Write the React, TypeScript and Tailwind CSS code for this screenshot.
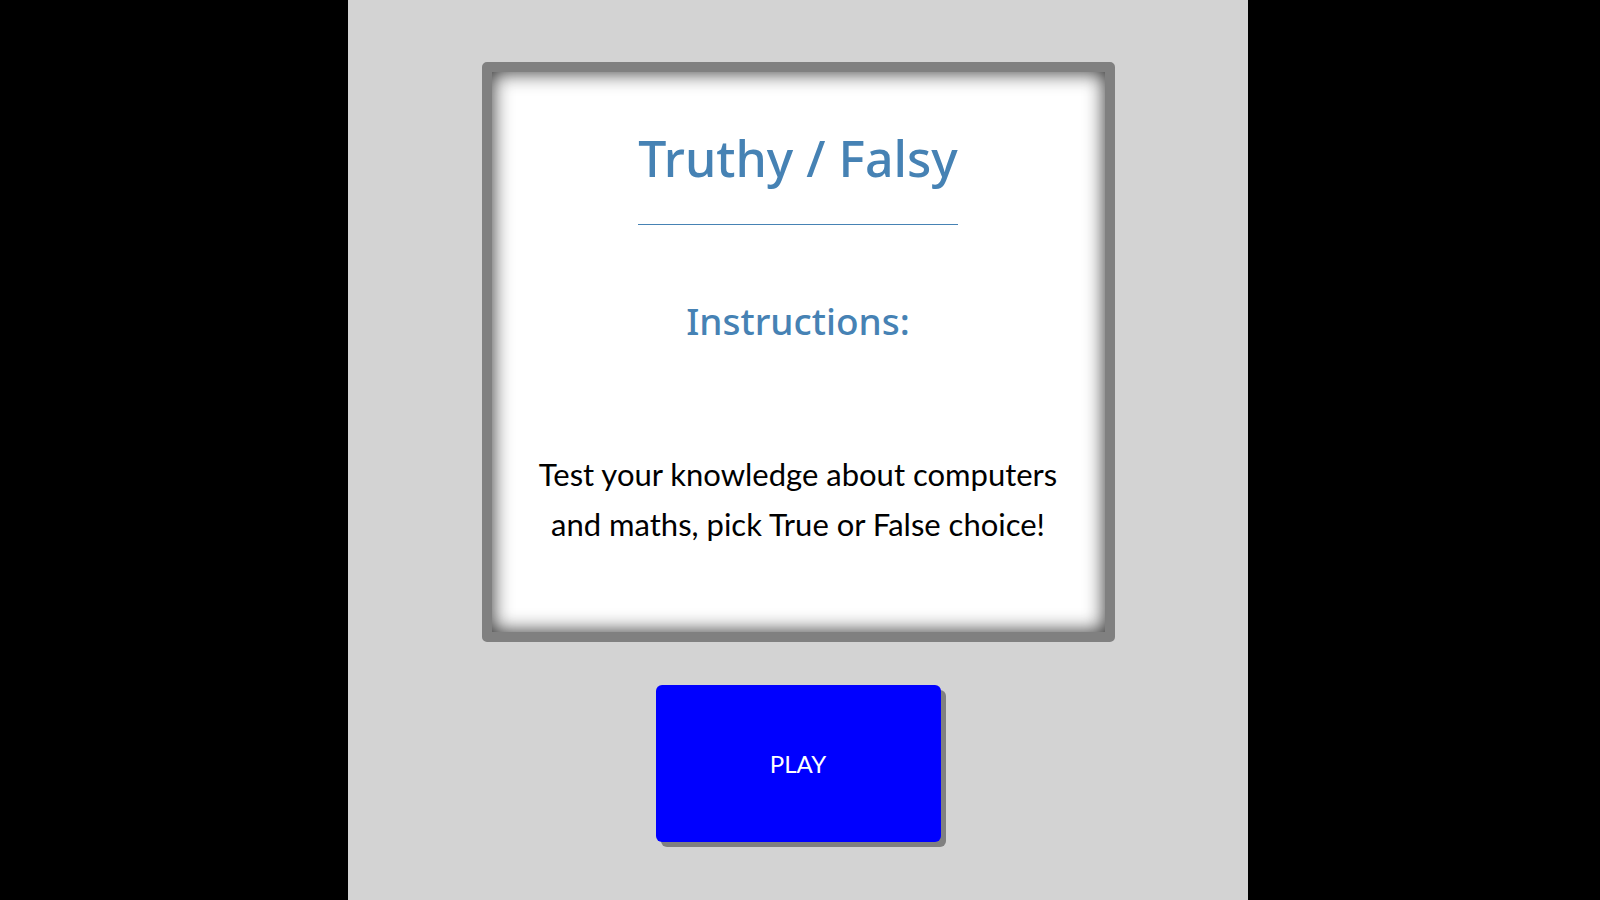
export default function App() {
  return (
    <div className="min-h-screen w-full bg-black">
      <div className="ml-[348px] min-h-screen w-[900px] bg-[#d3d3d3] pt-[62px] flex flex-col items-center">
        {/* card */}
        <div className="w-[633px] h-[580px] rounded-[5px] border-[10px] border-[#808080] bg-white shadow-[inset_0_0_20px_rgba(0,0,0,0.85)] flex flex-col items-center">
          <h1 className="mt-[56px] inline-block border-b border-[#4682b4] pb-[36px] text-[50px] leading-[60px] font-medium text-[#4682b4] [font-family:'Noto_Sans',sans-serif]">
            Truthy / Falsy
          </h1>
          <h2 className="mt-[74px] text-[37px] leading-[44px] font-medium text-[#4682b4] [font-family:'Noto_Sans',sans-serif]">
            Instructions:
          </h2>
          <p className="mt-[106px] w-[565px] text-center text-[31px] leading-[50px] text-black [font-family:Lato,sans-serif]">
            Test your knowledge about computers and maths, pick True or False choice!
          </p>
        </div>

        <button
          type="button"
          className="mt-[43px] w-[285px] h-[157px] rounded-[6px] bg-[#0000ff] text-white text-[24px] shadow-[5px_5px_0_#808080] [font-family:Lato,sans-serif]"
        >
          PLAY
        </button>
      </div>
    </div>
  )
}
